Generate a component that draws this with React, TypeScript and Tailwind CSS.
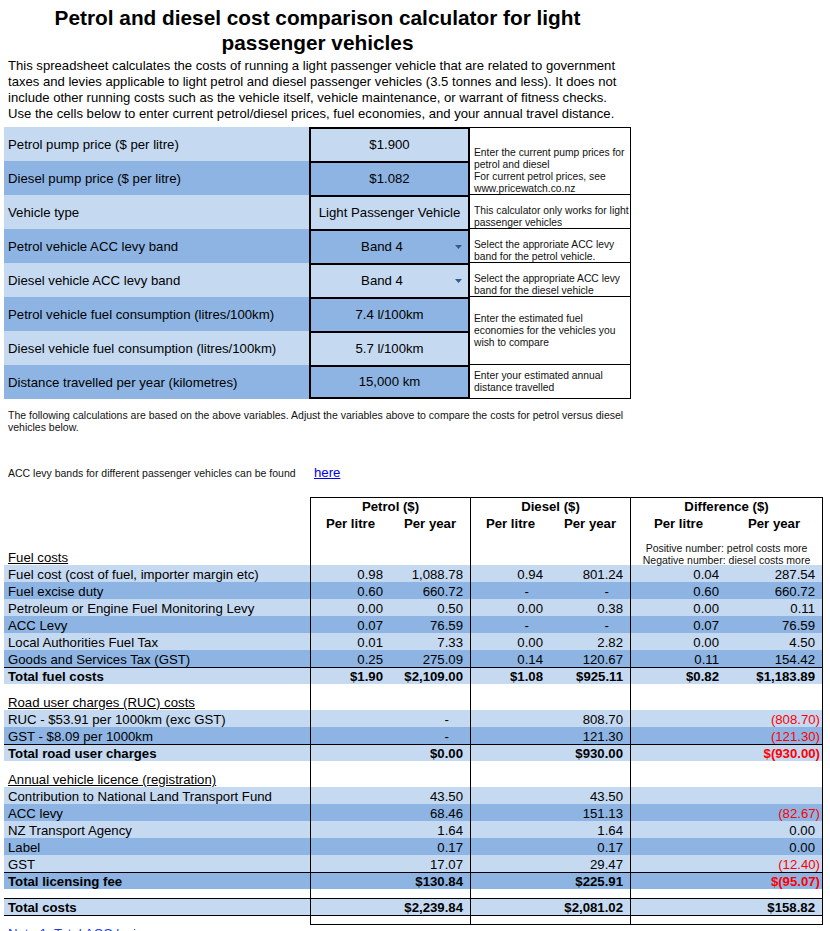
import clsx from "clsx";

const light = "bg-[#c5d9f1]";
const dark = "bg-[#8db4e2]";
const cols = "grid grid-cols-[306px_80px_80px_80px_80px_96px_97px]";

type InputRow = { label: string; value: string; tone: string; select?: boolean };

const inputs: InputRow[] = [
  { label: "Petrol pump price ($ per litre)", value: "$1.900", tone: light },
  { label: "Diesel pump price ($ per litre)", value: "$1.082", tone: dark },
  { label: "Vehicle type", value: "Light Passenger Vehicle", tone: light },
  { label: "Petrol vehicle ACC levy band", value: "Band 4", tone: dark, select: true },
  { label: "Diesel vehicle ACC levy band", value: "Band 4", tone: light, select: true },
  { label: "Petrol vehicle fuel consumption (litres/100km)", value: "7.4 l/100km", tone: dark },
  { label: "Diesel vehicle fuel consumption (litres/100km)", value: "5.7 l/100km", tone: light },
  { label: "Distance travelled per year (kilometres)", value: "15,000 km", tone: dark },
];

const notes = [
  {
    span: "row-span-2",
    align: "items-end",
    lines: ["Enter the current pump prices for", "petrol and diesel", "For current petrol prices, see", "www.pricewatch.co.nz"],
  },
  { span: "", align: "items-end", lines: ["This calculator only works for light", "passenger vehicles"] },
  { span: "", align: "items-end", lines: ["Select the approriate ACC levy", "band for the petrol vehicle."] },
  { span: "", align: "items-end", lines: ["Select the appropriate ACC levy", "band for the diesel vehicle"] },
  { span: "row-span-2", align: "items-center", lines: ["Enter the estimated fuel", "economies for the vehicles you", "wish to compare"] },
  { span: "", align: "items-center", lines: ["Enter your estimated annual", "distance travelled"] },
];

type Row = { label: string; vals: string[]; tone: string; total?: boolean };

const fuelRows: Row[] = [
  { label: "Fuel cost (cost of fuel, importer margin etc)", vals: ["0.98", "1,088.78", "0.94", "801.24", "0.04", "287.54"], tone: light },
  { label: "Fuel excise duty", vals: ["0.60", "660.72", "-", "-", "0.60", "660.72"], tone: dark },
  { label: "Petroleum or Engine Fuel Monitoring Levy", vals: ["0.00", "0.50", "0.00", "0.38", "0.00", "0.11"], tone: light },
  { label: "ACC Levy", vals: ["0.07", "76.59", "-", "-", "0.07", "76.59"], tone: dark },
  { label: "Local Authorities Fuel Tax", vals: ["0.01", "7.33", "0.00", "2.82", "0.00", "4.50"], tone: light },
  { label: "Goods and Services Tax (GST)", vals: ["0.25", "275.09", "0.14", "120.67", "0.11", "154.42"], tone: dark },
  { label: "Total fuel costs", vals: ["$1.90", "$2,109.00", "$1.08", "$925.11", "$0.82", "$1,183.89"], tone: light, total: true },
];

const rucRows: Row[] = [
  { label: "RUC - $53.91 per 1000km (exc GST)", vals: ["", "-", "", "808.70", "", "(808.70)"], tone: light },
  { label: "GST - $8.09 per 1000km", vals: ["", "-", "", "121.30", "", "(121.30)"], tone: dark },
  { label: "Total road user charges", vals: ["", "$0.00", "", "$930.00", "", "$(930.00)"], tone: light, total: true },
];

const licenceRows: Row[] = [
  { label: "Contribution to National Land Transport Fund", vals: ["", "43.50", "", "43.50", "", ""], tone: light },
  { label: "ACC levy", vals: ["", "68.46", "", "151.13", "", "(82.67)"], tone: dark },
  { label: "NZ Transport Agency", vals: ["", "1.64", "", "1.64", "", "0.00"], tone: light },
  { label: "Label", vals: ["", "0.17", "", "0.17", "", "0.00"], tone: dark },
  { label: "GST", vals: ["", "17.07", "", "29.47", "", "(12.40)"], tone: light },
  { label: "Total licensing fee", vals: ["", "$130.84", "", "$225.91", "", "$(95.07)"], tone: dark, total: true },
];

// vertical rules of the comparison table
const edge = (i: number) => clsx(i % 2 === 0 && "border-l border-black", i === 5 && "border-r border-black");

function Num({ v, i, lh }: { v: string; i: number; lh: string }) {
  const neg = v.includes("(");
  return (
    <div
      className={clsx(
        "text-right whitespace-nowrap",
        lh,
        edge(i),
        neg ? "pr-[2px] text-[#ff0000]" : v === "-" ? "pr-[21px]" : "pr-[7px]"
      )}
    >
      {v}
    </div>
  );
}

function DataRow({ row }: { row: Row }) {
  const lh = row.total ? "leading-[18px]" : "leading-[20px]";
  return (
    <div className={clsx(cols, "h-[17px]", row.tone, row.total && "border-t border-black font-bold")}>
      <div className={clsx("pl-[4px] whitespace-nowrap", lh)}>{row.label}</div>
      {row.vals.map((v, i) => (
        <Num key={i} v={v} i={i} lh={lh} />
      ))}
    </div>
  );
}

function Blank({ h, label, bottom }: { h: string; label?: string; bottom?: boolean }) {
  return (
    <div className={clsx(cols, h)}>
      <div className="pl-[4px] flex items-end">
        {label && <span className="underline leading-[14px]">{label}</span>}
      </div>
      {[0, 1, 2, 3, 4, 5].map((i) => (
        <div key={i} className={clsx(edge(i), bottom && "border-b border-black")} />
      ))}
    </div>
  );
}

function Group({ title, last, children }: { title: string; last?: boolean; children?: React.ReactNode }) {
  return (
    <div className={clsx("border-l border-t border-black h-[68px]", last && "border-r")}>
      <div className="h-[17px] leading-[18px] text-center font-bold">{title}</div>
      <div className={clsx("grid font-bold h-[17px] leading-[17px] text-center", last ? "grid-cols-[95px_96px]" : "grid-cols-[79px_80px]")}>
        <div>Per litre</div>
        <div>Per year</div>
      </div>
      {children}
    </div>
  );
}

export default function App() {
  return (
    <div className="min-h-screen bg-white text-black font-['Liberation_Sans',Arial,sans-serif] text-[13.2px]">
      {/* heading */}
      <div className="w-[627px] ml-[4px] pt-[5px] text-center font-bold text-[20.8px] leading-[25px]">
        Petrol and diesel cost comparison calculator for light
        <br />
        passenger vehicles
      </div>
      <div className="pl-[8px] text-[13.1px] leading-[16px] mt-[3px] whitespace-nowrap">
        This spreadsheet calculates the costs of running a light passenger vehicle that are related to government
        <br />
        taxes and levies applicable to light petrol and diesel passenger vehicles (3.5 tonnes and less). It does not
        <br />
        include other running costs such as the vehicle itself, vehicle maintenance, or warrant of fitness checks.
        <br />
        Use the cells below to enter current petrol/diesel prices, fuel economies, and your annual travel distance.
      </div>

      {/* input cells */}
      <div className="grid grid-cols-[305px_161px_161px] grid-rows-[repeat(8,34px)] grid-flow-col ml-[4px] mt-[5px]">
        {inputs.map((r, i) => (
          <div key={"l" + i} className={clsx("flex items-center pl-[4px] pt-[1px]", r.tone)}>
            {r.label}
          </div>
        ))}
        {inputs.map((r, i) => (
          <div
            key={"v" + i}
            className={clsx(
              "flex items-center border-x-2 border-t-2 border-black",
              i === inputs.length - 1 && "border-b-2",
              r.tone
            )}
          >
            {r.select ? (
              <>
                <div className="flex-1 text-center pl-[2px]">{r.value}</div>
                <svg width="16" height="6" viewBox="0 0 16 6" className="mr-[1px]">
                  <polygon points="4,1 11,1 7.5,5" fill="#2f5b94" />
                </svg>
              </>
            ) : (
              <div className="flex-1 text-center">{r.value}</div>
            )}
          </div>
        ))}
        {notes.map((n, i) => (
          <div
            key={"n" + i}
            className={clsx(
              "flex border-r border-b border-black pl-[4px] text-[10.3px] leading-[12px] text-[#111] whitespace-nowrap",
              i === 0 && "border-t",
              n.span,
              n.align
            )}
          >
            <div className={clsx(n.align === "items-end" && "mb-[-1px]")}>
              {n.lines.map((t, j) => (
                <div key={j}>{t}</div>
              ))}
            </div>
          </div>
        ))}
      </div>

      <div className="pl-[8px] mt-[10px] text-[10.5px] leading-[12px] text-[#111] whitespace-nowrap">
        The following calculations are based on the above variables. Adjust the variables above to compare the costs for petrol versus diesel
        <br />
        vehicles below.
      </div>

      <div className="flex items-baseline ml-[4px] mt-[31px] h-[17px]">
        <div className="w-[306px] pl-[4px] text-[10.5px] text-[#111]">ACC levy bands for different passenger vehicles can be found</div>
        <a href="#" className="pl-[4px] text-[#0000ee] underline leading-[17px]">
          here
        </a>
      </div>

      {/* comparison table */}
      <div className="ml-[4px] mt-[16px] w-[819px]">
        <div className="grid grid-cols-[306px_160px_160px_193px]">
          <div className="flex items-end pl-[4px]">
            <span className="underline leading-[14px]">Fuel costs</span>
          </div>
          <Group title="Petrol ($)" />
          <Group title="Diesel ($)" />
          <Group title="Difference ($)" last>
            <div className="text-center text-[10.5px] leading-[12px] text-[#111] pt-[10px] whitespace-nowrap">
              Positive number: petrol costs more
              <br />
              Negative number: diesel costs more
            </div>
          </Group>
        </div>
        {fuelRows.map((r) => (
          <DataRow key={r.label} row={r} />
        ))}
        <Blank h="h-[9px]" />
        <Blank h="h-[17px]" label="Road user charges (RUC) costs" />
        {rucRows.map((r) => (
          <DataRow key={r.label} row={r} />
        ))}
        <Blank h="h-[9px]" />
        <Blank h="h-[17px]" label="Annual vehicle licence (registration)" />
        {licenceRows.map((r) => (
          <DataRow key={r.label} row={r} />
        ))}
        <Blank h="h-[9px]" />
        <div className={clsx(cols, "h-[18px] border-y border-black font-bold", light)}>
          <div className="pl-[4px] leading-[18px]">Total costs</div>
          {["", "$2,239.84", "", "$2,081.02", "", "$158.82"].map((v, i) => (
            <Num key={i} v={v} i={i} lh="leading-[18px]" />
          ))}
        </div>
        <Blank h="h-[9px]" bottom />
      </div>

      <div className="pl-[8px] leading-[17px] text-[#1f3fd8]">Note 1: Total ACC levies</div>
    </div>
  );
}
